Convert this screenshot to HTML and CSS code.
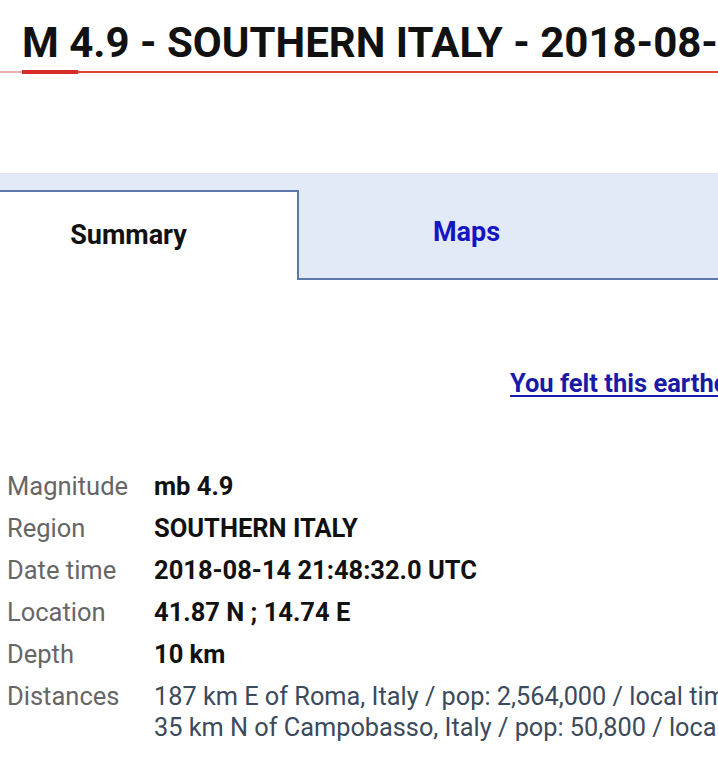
FILE: index.html
```html
<!DOCTYPE html>
<html>
<head>
<meta charset="utf-8">
<link rel="stylesheet" href="styles.css">
</head>
<body>
<header class="head">
  <h1 class="title">M 4.9 - SOUTHERN ITALY - 2018-08-14</h1>
  <div class="rule"><span class="rule-start"></span><span class="rule-accent"></span></div>
</header>
<nav class="tabs">
  <div class="tab tab-active">Summary</div>
  <div class="tab tab-link">Maps</div>
</nav>
<div class="felt"><a href="#" class="felt-link">You felt this earthquake?</a></div>
<div class="info">
  <div class="label">Magnitude</div><div class="value">mb 4.9</div>
  <div class="label">Region</div><div class="value">SOUTHERN ITALY</div>
  <div class="label">Date time</div><div class="value">2018-08-14 21:48:32.0 UTC</div>
  <div class="label">Location</div><div class="value">41.87 N ; 14.74 E</div>
  <div class="label">Depth</div><div class="value">10 km</div>
  <div class="label label-top">Distances</div><div class="dist">187 km E of Roma, Italy / pop: 2,564,000 / local time<br>35 km N of Campobasso, Italy / pop: 50,800 / local time</div>
</div>
</body>
</html>
```

FILE: styles.css
```css
html, body {
  margin: 0;
  padding: 0;
  background: #fff;
  overflow: hidden;
  width: 718px;
  height: 765px;
}
body {
  font-family: Roboto, "Noto Sans", sans-serif;
  color: #111;
}
.head {
  padding-top: 20px;
}
.title {
  margin: 0;
  padding-left: 22px;
  font-size: 42px;
  line-height: 46px;
  font-weight: 700;
  white-space: nowrap;
  color: #111;
}
.rule {
  margin-top: 5px;
  height: 2px;
  background: #d8423f;
  display: flex;
}
.rule-start {
  width: 22px;
  height: 2px;
  background: #eab0b0;
}
.rule-accent {
  width: 56px;
  height: 4px;
  margin-top: -1px;
  background: #d62d2a;
}
.tabs {
  margin-top: 100px;
  height: 90px;
  padding-top: 17px;
  background: #e2eaf8;
  display: flex;
}
.tab {
  box-sizing: border-box;
  height: 90px;
  display: flex;
  align-items: center;
  justify-content: center;
  font-size: 27px;
  font-weight: 700;
}
.tab-active {
  width: 299px;
  background: #fff;
  border-top: 2px solid #5c78aa;
  border-right: 2px solid #5c78aa;
  color: #111;
  padding-right: 40px;
  padding-bottom: 2px;
}
.tab-link {
  flex: 1;
  border-bottom: 2px solid #5c78aa;
  color: #1515c4;
  padding-bottom: 5px;
  padding-right: 84px;
}
.felt {
  margin-top: 88px;
  padding-left: 510px;
  white-space: nowrap;
  height: 30px;
}
.felt-link {
  font-size: 25.5px;
  font-weight: 700;
  color: #1a1aa8;
  text-decoration: underline;
  text-decoration-thickness: 2px;
  text-underline-offset: 3px;
}
.info {
  margin-top: 67px;
  display: grid;
  grid-template-columns: 154px auto;
  grid-auto-rows: 42px;
  white-space: nowrap;
  font-size: 25.5px;
}
.label {
  padding-left: 7px;
  color: #666;
  display: flex;
  align-items: center;
}
.label-top {
  align-items: flex-start;
  padding-top: 6px;
}
.value {
  font-weight: 700;
  color: #111;
  display: flex;
  align-items: center;
}
.dist {
  font-size: 25.3px;
  color: #3b4a5c;
  line-height: 31px;
  padding-top: 6px;
}
```
